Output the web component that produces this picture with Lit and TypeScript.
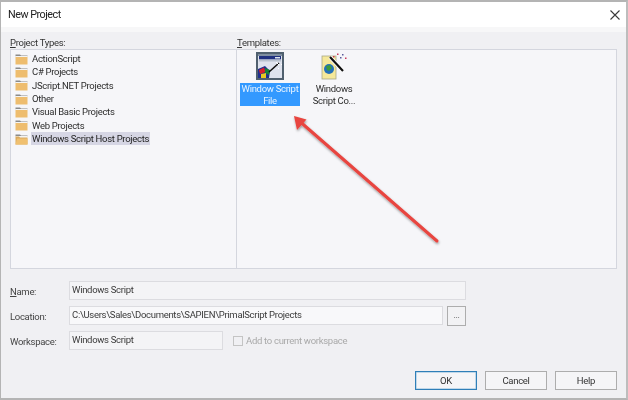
import { LitElement, html, css, svg } from "lit";
import { customElement } from "lit/decorators.js";

const folder = (open: boolean) => html`<svg class="folder" width="13" height="12" viewBox="0 0 13 12">
  <path d="M0.5 1.5H5L6 2.5H12.5V3.5H0.5Z" fill="#8a8a8a"/>
  <rect x="0.5" y="3" width="12" height="1" fill="#f4f4f4"/>
  ${open
    ? svg`<path d="M0.5 3.5H4L5 4.5H12.5V11.5H0.5Z" fill="#d9a95e"/><path d="M0.5 11.5L2 5.5H12.5V11.5Z" fill="#f0c070"/>`
    : svg`<rect x="0.5" y="4" width="12" height="7.5" fill="#eebd6f"/>`}
</svg>`;

const types = ["ActionScript", "C# Projects", "JScript.NET Projects", "Other", "Visual Basic Projects", "Web Projects", "Windows Script Host Projects"];

@customElement("app-root")
export class AppRoot extends LitElement {
  static styles = css`
    :host { display: block; width: 628px; height: 400px; font-family: Roboto, "Open Sans", sans-serif; font-size: 9.5px; letter-spacing: -0.3px; color: #2c2c2c; }
    * { box-sizing: border-box; }
    .win { position: relative; width: 628px; height: 400px; border: 1px solid #b4b4b4; border-top: 2px solid #b4b4b4; border-right: 2px solid #bdbdbd; border-bottom: 2px solid #b4b4b4; background: #f0f0f3; display: flex; flex-direction: column; overflow: hidden; filter: blur(0.25px); }
    .title { height: 25px; flex: none; background: #fff; display: flex; align-items: center; justify-content: space-between; padding: 0 5px 1px 7px; font-size: 10.8px; letter-spacing: -0.5px; color: #222; }
    .close { display: block; margin-right: 1px; margin-top: 2px; }
    .band { height: 5px; flex: none; background: #f7f7f8; }
    .panes-labels { display: flex; padding: 5px 0 0 9px; height: 17px; flex: none; line-height: 11px; color: #333; }
    .lab-left { width: 227px; }
    u { text-underline-offset: 1px; }
    .panes { display: flex; margin: 0 9px 0 9px; height: 220px; flex: none; border: 1px solid #d4d6de; background: #f6f6f9; }
    .list { width: 218px; flex: none; padding: 2px 0 0 4px; }
    .sep { width: 8px; flex: none; background: #f6f6f9; border-right: 1px solid #d4d6de; }
    .row { display: flex; align-items: center; height: 13.33px; gap: 3px; white-space: nowrap; }
    .row span { padding: 0 1px; line-height: 13px; }
    .row .sel { background: #d6d6e4; color: #222; }
    .folder { flex: none; }
    .tpl { flex: 1; display: flex; padding: 2px 0 0 3px; gap: 4px; }
    .item { width: 60px; display: flex; flex-direction: column; align-items: center; }
    .item svg { display: block; margin-bottom: 3px; }
    .cap { width: 60px; height: 23px; line-height: 11.5px; text-align: center; white-space: nowrap; }
    .cap.on { background: #3399ff; color: #e8f4ff; }
    .form { flex: none; padding: 12px 9px 0 9px; display: flex; flex-direction: column; }
    .frow { display: flex; align-items: center; height: 19px; margin-bottom: 6px; }
    .flabel { width: 59px; flex: none; color: #444; padding-top: 1px; }
    .input { height: 19px; border: 1px solid #dcdce0; background: #f4f4f6; padding: 0 2px; line-height: 15px; color: #3a3a3a; white-space: nowrap; overflow: hidden; }
    .input.w1 { width: 397px; }
    .input.w2 { width: 374px; background: #f8f8fa; }
    .input.w3 { width: 154px; }
    .more { width: 19px; height: 20px; margin-left: 4px; border: 1px solid #adadad; background: #f2f2f4; line-height: 16px; text-align: center; color: #555; font-size: 9px; }
    .chk { width: 10px; height: 10px; margin-left: 10px; border: 1px solid #c4c4c4; background: #f0f0f3; flex: none; }
    .chklabel { margin-left: 3px; color: #a9a9a9; }
    .btns { display: flex; justify-content: flex-end; gap: 8px; padding: 15px 9px 0 0; }
    .btn { width: 62px; height: 19px; border: 1px solid #adadad; background: #f5f5f7; line-height: 16px; text-align: center; color: #333; font-family: inherit; font-size: 9.5px; letter-spacing: -0.3px; padding: 0; }
    .btn.def { border: 1px solid #2f7fb8; box-shadow: inset 0 0 0 0.5px #8dbcdc; }
    .arrow { position: absolute; left: 0; top: 0; pointer-events: none; }
  `;

  render() {
    return html`<div class="win">
      <div class="title"><span>New Project</span>
        <svg class="close" width="10" height="10" viewBox="0 0 10 10"><path d="M0.5 0.5L9.5 9.5M9.5 0.5L0.5 9.5" stroke="#3a3a3a" stroke-width="1.1" fill="none"/></svg>
      </div>
      <div class="band"></div>
      <div class="panes-labels"><div class="lab-left"><u>P</u>roject Types:</div><div><u>T</u>emplates:</div></div>
      <div class="panes">
        <div class="list">
          ${types.map((t, i) => html`<div class="row">${folder(i === 6)}<span class=${i === 6 ? "sel" : ""}>${t}</span></div>`)}
        </div>
        <div class="sep"></div>
        <div class="tpl">
          <div class="item">
            <svg width="28" height="28" viewBox="0 0 28 28">
              <rect x="1" y="1" width="26" height="26" fill="#dfe3ee" stroke="#50606f" stroke-width="2"/>
              <rect x="2" y="2" width="24" height="2" fill="#7f8ea0"/>
              <rect x="3" y="4" width="22" height="3.5" fill="#20307f"/>
              <rect x="19" y="5" width="5" height="1.5" fill="#dfe6ee"/>
              <rect x="3" y="7.5" width="22" height="2" fill="#b9c2cf"/>
              <path d="M2 17L9 14L14 19L13 26H2Z" fill="#1f2f8f"/>
              <path d="M3 18L8 15.5L9.5 20L4 22Z" fill="#d8202a"/>
              <path d="M9 16L14 18L13 23L9 21Z" fill="#18803a"/>
              <path d="M5 22L10 21L10 26L5 26Z" fill="#e8c820"/>
              <path d="M13 20L23 11" stroke="#111" stroke-width="1.6"/>
              <path d="M20 10L23 13M25 12L26 13M22 16L23 17" stroke="#fff" stroke-width="1"/>
            </svg>
            <div class="cap on">Window Script<br/>File</div>
          </div>
          <div class="item">
            <svg width="28" height="28" viewBox="0 0 28 28">
              <rect x="2" y="4" width="14" height="23" fill="#f5e89a" stroke="#a8a888" stroke-width="0.8"/>
              <circle cx="9" cy="17" r="5" fill="#2470b8"/>
              <path d="M6 14L10 13L12 16L9 19L7 18Z" fill="#3c9a3c"/>
              <path d="M10 5L23 19" stroke="#fff" stroke-width="4"/>
              <path d="M10 5L23 19" stroke="#111" stroke-width="2.2"/>
              <g fill="#c8385a"><rect x="13" y="4" width="1.5" height="1.5"/><rect x="17" y="1.5" width="1.5" height="1.5"/><rect x="25" y="5.5" width="1.5" height="1.5"/></g>
              <g fill="#5a5a9a"><rect x="20" y="5" width="1.5" height="1.5"/><rect x="22" y="2" width="1.5" height="1.5"/></g>
            </svg>
            <div class="cap">Windows<br/>Script Co...</div>
          </div>
        </div>
      </div>
      <div class="form">
        <div class="frow"><div class="flabel"><u>N</u>ame:</div><div class="input w1">Windows Script</div></div>
        <div class="frow"><div class="flabel">Location:</div><div class="input w2">C:\\Users\\Sales\\Documents\\SAPIEN\\PrimalScript Projects</div><div class="more">...</div></div>
        <div class="frow"><div class="flabel">Workspace:</div><div class="input w3">Windows Script</div><div class="chk"></div><div class="chklabel">Add to current workspace</div></div>
      </div>
      <div class="btns">
        <button class="btn def">OK</button><button class="btn">Cancel</button><button class="btn">Help</button>
      </div>
      <svg class="arrow" width="628" height="400" viewBox="1 2 628 400">
        <defs><filter id="s" x="-10%" y="-10%" width="120%" height="120%"><feDropShadow dx="0.5" dy="1.5" stdDeviation="1" flood-color="#000" flood-opacity="0.4"/></filter></defs>
        <g filter="url(#s)">
          <path d="M301 122.5L437 241" stroke="#e8453f" stroke-width="3" stroke-linecap="round" fill="none"/>
          <path d="M294 116L306.5 119.5L297 130Z" fill="#e8453f"/>
        </g>
      </svg>
    </div>`;
  }
}
